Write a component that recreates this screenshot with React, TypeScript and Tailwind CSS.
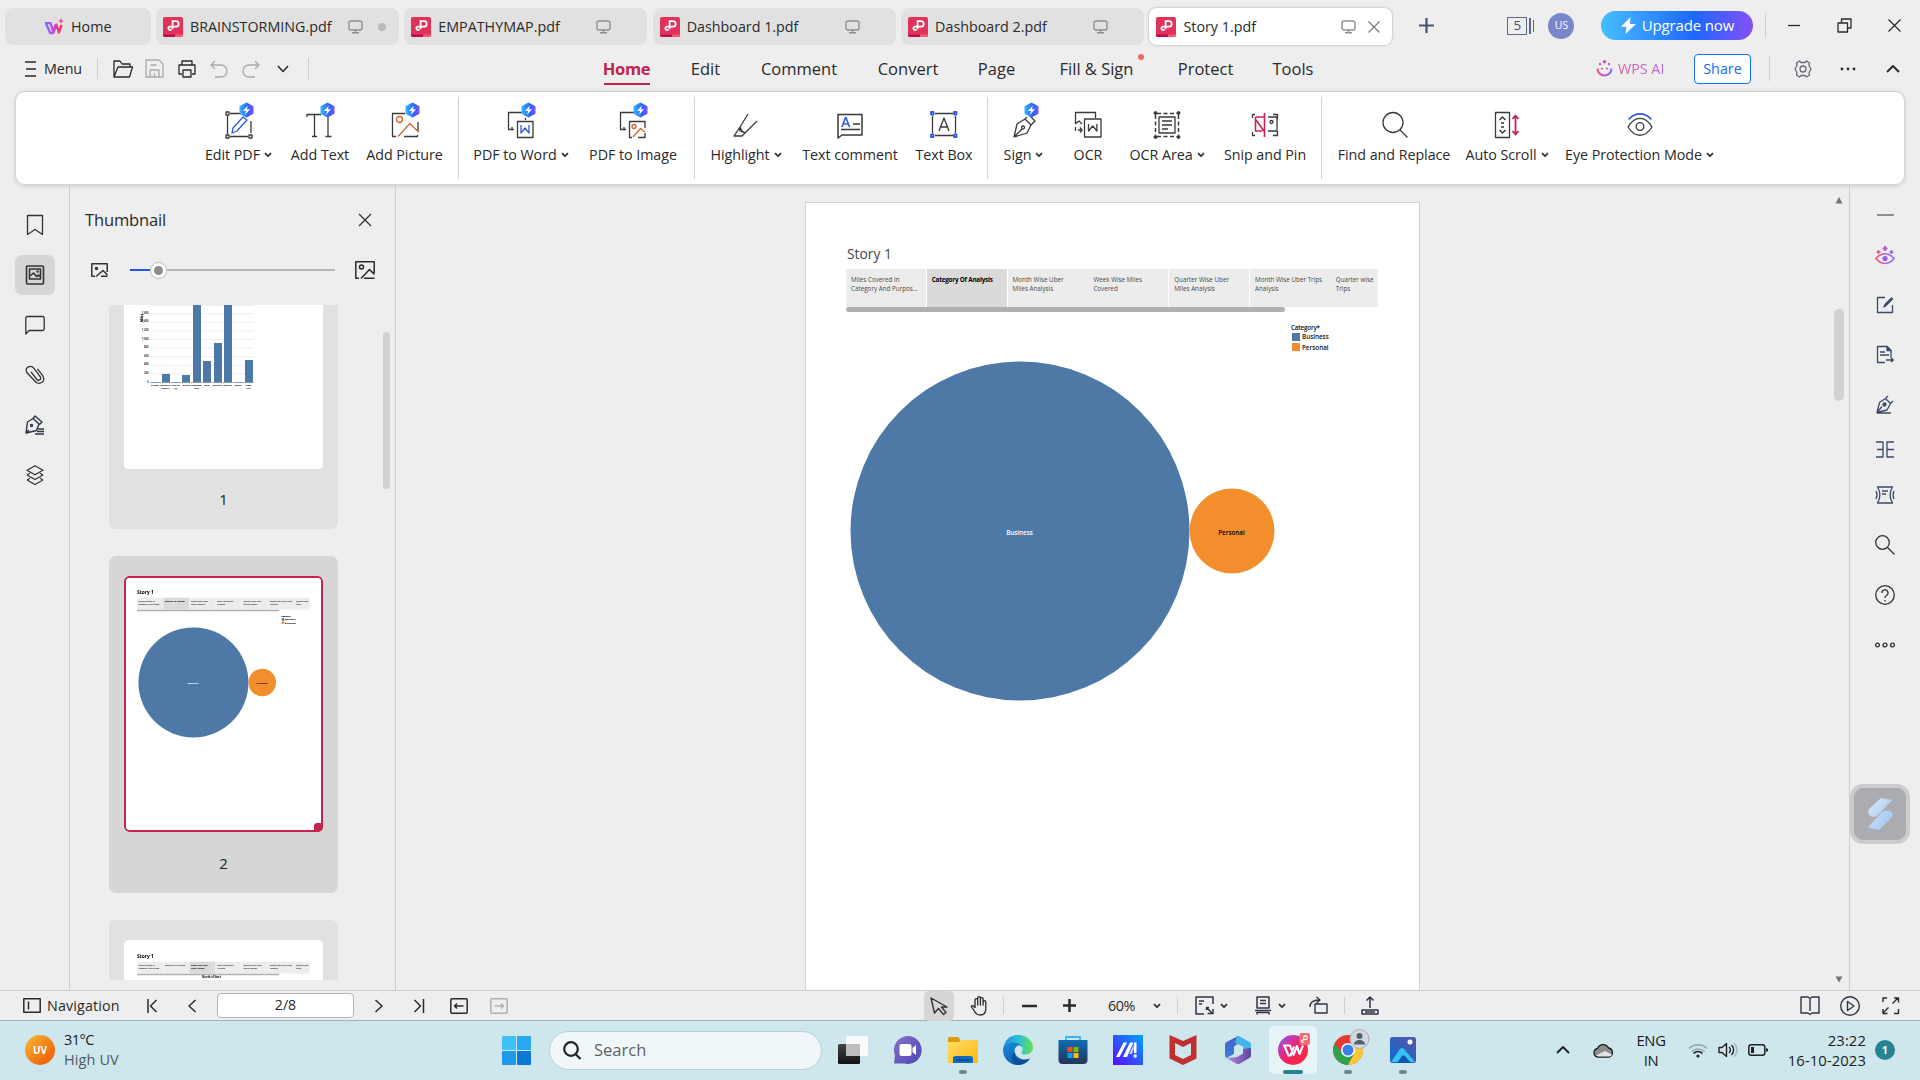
import React from "react";

type P = { children?: React.ReactNode; className?: string };

/* Line icon on a pixel grid: w × h units drawn at the same size */
function Ic({ w = 20, h = 20, sw = 1.3, className = "text-[#333]", children }: P & { w?: number; h?: number; sw?: number }) {
  return (
    <svg width={w} height={h} viewBox={`0 0 ${w} ${h}`} fill="none" stroke="currentColor" strokeWidth={sw} strokeLinejoin="round" className={`shrink-0 overflow-visible ${className}`}>
      {children}
    </svg>
  );
}

const Rule = ({ className = "" }: P) => <div className={`w-px shrink-0 bg-[#cfcfcf] ${className}`} />;

const Chev = ({ className = "" }: P) => (
  <Ic w={8} h={6} sw={1.8} className={`text-[#333] ${className}`}><path d="M1 1.2 4 4.2 7 1.2" /></Ic>
);

const Monitor = ({ className = "" }: P) => (
  <Ic w={15} h={14} sw={1.4} className={`text-[#8f8f8f] ${className}`}>
    <rect x="1" y="1" width="13" height="9" rx="2" /><path d="M7.500 10v2.500M4 12.800h7" />
  </Ic>
);

const PdfLogo = () => (
  <svg width="20" height="20" viewBox="0 0 20 20" className="shrink-0">
    <rect width="20" height="20" rx="2" fill="#e2325a" />
    <path d="M0 17.500h12V20H2a2 2 0 0 1-2-2z" fill="#b8104a" /><path d="M12 17.500h8V18a2 2 0 0 1-2 2h-6z" fill="#ff5570" />
    <path d="M9.600 12V4.200h3.400a2.700 2.700 0 0 1 0 5.400H7a1.700 1.700 0 1 0 1.500 2.600" fill="none" stroke="#fff" strokeWidth="1.800" />
  </svg>
);

function DocTab({ name, dot, active }: { name: string; dot?: boolean; active?: boolean }) {
  return (
    <div className={`flex h-[37px] w-[243px] shrink-0 items-center rounded-lg pl-[7px] ${active ? "bg-white shadow-[0_0_2px_1px_rgba(0,0,0,0.14)]" : "bg-[#e1e1e1]"}`}>
      <PdfLogo />
      <span className="ml-[7px] w-[158px] whitespace-nowrap">{name}</span>
      <Monitor />
      {dot && <span className="ml-[15px] size-2 rounded-full bg-[#b9b9b9]" />}
      {active && <Ic w={12} h={12} sw={1.2} className="ml-[12px] text-[#777]"><path d="m.5.5 11 11m0-11-11 11" /></Ic>}
    </div>
  );
}

function TitleBar() {
  return (
    <div className="flex h-[46px] pl-[5px] pt-2">
      <div className="flex gap-[5.400px]">
        <div className="flex h-[37px] w-[145.500px] items-center rounded-lg bg-[#e1e1e1] pl-[39px]">
          <svg width="20" height="18" viewBox="0 0 20 18" fill="none">
            <defs><linearGradient id="wps" x1="0" x2="1"><stop stopColor="#7c6cff" /><stop offset=".5" stopColor="#c44be8" /><stop offset="1" stopColor="#ff2e50" /></linearGradient></defs>
            <path d="M1 5.200H6.500L9.500 14.500 12.500 6.500l2.300 8 2.700-7.500M2 5.500 6.200 15h2.600L11.500 6.500" stroke="url(#wps)" strokeWidth="2.300" strokeLinejoin="round" />
            <path d="m17 0 .8 2.200L20 3l-2.200.8L17 6l-.8-2.200L14 3l2.200-.8z" fill="#ee3b8c" />
          </svg>
          <span className="ml-[7px]">Home</span>
        </div>
        <DocTab name="BRAINSTORMING.pdf" dot />
        <DocTab name="EMPATHYMAP.pdf" />
        <DocTab name="Dashboard 1.pdf" />
        <DocTab name="Dashboard 2.pdf" />
        <DocTab name="Story 1.pdf" active />
      </div>
      <div className="ml-[27px] flex h-[35px] items-center">
        <Ic w={15} h={15} sw={2.200} className="text-[#42546f]"><path d="M7.500 0v15M0 7.500h15" /></Ic>
        <div className="ml-[73px] flex items-center gap-[2px] text-[#42546f]">
          <div className="flex h-[18px] w-[20px] items-center justify-center border-[1.500px] border-[#5a6a84] text-[13.500px]">5</div>
          <div className="h-4 w-[1.500px] bg-[#5a6a84]" /><div className="h-3 w-[1.500px] bg-[#5a6a84]" />
        </div>
        <div className="ml-[14px] flex size-[26px] items-center justify-center rounded-full bg-[#7a86cc] text-[10.500px] text-white">US</div>
        <div className="ml-[27px] flex h-[29px] w-[152px] items-center justify-center gap-[6px] rounded-full bg-[linear-gradient(90deg,#45bfff,#1f66ff_62%,#8550f8)] text-[15px] text-white">
          <svg width="15" height="17" viewBox="0 0 15 17" fill="#fff"><path d="M9.500 0 0 9.700h5.500L4.500 17 15 7H9z" /></svg>
          <span className="tracking-[-0.15px]">Upgrade now</span>
        </div>
        <Rule className="ml-3 h-6" />
        <Ic w={12} h={14} className="ml-[22px]"><path d="M0 6.500h12" /></Ic>
        <Ic w={15} h={15} className="ml-[37px]"><path d="M1 5h9.500v9H1zM4.500 5V1H14v9h-3.500" /></Ic>
        <Ic w={13} h={13} className="ml-[36px]"><path d="m.5.5 12 12m0-12-12 12" /></Ic>
      </div>
    </div>
  );
}

const MENU: [string, string][] = [
  ["Edit", "ml-[40px] w-[29px]"],
  ["Comment", "ml-[41px] w-[76px]"],
  ["Convert", "ml-[41px] w-[60px]"],
  ["Page", "ml-[40px] w-[37px]"],
  ["Fill & Sign", "ml-[43px] w-[77px]"],
  ["Protect", "ml-[43px] w-[55px]"],
  ["Tools", "ml-[41px] w-[38px]"],
];

function MenuBar() {
  return (
    <div className="flex h-[45px] items-center">
      <Ic w={11} h={16} className="ml-[24.500px]"><path d="M0 1h11M1 8h10M0 15h11" /></Ic>
      <span className="ml-[8.500px] w-[38px] tracking-[-0.1px]">Menu</span>
      <Rule className="ml-[15px] h-[21px]" />
      <Ic w={20} h={18} className="ml-[15px]"><path d="M1 17V1h6l2 3h8v3M1 17 5 7h14.500l-3 10z" /></Ic>
      <Ic w={19} h={19} className="ml-[12px] text-[#aaa]"><path d="M1 1h13l4 4v13H1zM5.500 6h6M5 18v-7h9v7M9.500 14v4" /></Ic>
      <Ic w={18} h={18} className="ml-[14px]"><path d="M4 5V1h10v4M4 14H1V5h16v9h-3M5 10h8v7H5z" /></Ic>
      <Ic w={18} h={18} className="ml-[14px] text-[#aaa]"><path d="M5 1 1 5l4 4M1 5h10a6 6 0 0 1 0 12H5" /></Ic>
      <Ic w={18} h={18} className="ml-[14px] text-[#aaa]"><path d="m13 1 4 4-4 4M17 5H7a6 6 0 0 0 0 12h6" /></Ic>
      <Ic w={12} h={8} sw={1.500} className="ml-[17px]"><path d="m1 1 5 5.500L11 1" /></Ic>
      <Rule className="ml-[19px] h-[21px]" />
      <div className="ml-[293px] flex h-full items-end text-[16.500px]">
        <div className="flex h-[39px] w-[49px] flex-col items-center justify-between whitespace-nowrap font-bold text-[#c2224d]">
          <span className="mt-[4px] leading-[26px] tracking-[-0.3px]">Home</span>
          <div className="mb-[6px] h-[2px] w-[46px] bg-[#c8234f]" />
        </div>
        {MENU.map(([t, c]) => (
          <div key={t} className={`flex h-[39px] justify-center whitespace-nowrap pt-[4px] leading-[26px] ${c}`}>
            {t}
            {t === "Fill & Sign" && <div className="-mt-[2px] w-0"><div className="ml-[5px] size-[6px] rounded-full bg-[#ee6a66]" /></div>}
          </div>
        ))}
      </div>
      <svg width="17" height="18" viewBox="0 0 17 18" fill="none" className="ml-[284px] shrink-0">
        <defs><linearGradient id="ai" x1="0" x2="1"><stop stopColor="#f0506e" /><stop offset=".5" stopColor="#c45ad0" /><stop offset="1" stopColor="#7d6bff" /></linearGradient></defs>
        <path d="M1.500 8.500a7 7 0 0 0 14 0" stroke="url(#ai)" strokeWidth="2" />
        <g fill="#c857c0"><circle cx="8.500" cy="1.800" r="1.800" /><circle cx="4" cy="4" r="1.200" /><circle cx="13" cy="4" r="1.200" /><circle cx="6" cy="8.500" r="1.100" /><circle cx="11" cy="8.500" r="1.100" /></g>
      </svg>
      <span className="ml-[5px] w-[48px] whitespace-nowrap bg-[linear-gradient(90deg,#dd5d9c,#a86ae8)] bg-clip-text text-transparent">WPS AI</span>
      <div className="ml-[28px] flex h-[30px] w-[57px] items-center justify-center rounded border border-[#1070f5] bg-white text-[#1070f5]">Share</div>
      <Rule className="ml-[18px] h-[25px]" />
      <Ic w={18} h={18} className="ml-[24px] text-[#666b78]"><path d="M5.500 1 7 2.500h4L12.500 1l3 2-.5 2.500L17 9l-2 3.500.5 2.500-3 2-1.500-1.500H7L5.500 17l-3-2 .5-2.500L1 9l2-3.500L2.500 3z" /><circle cx="9" cy="9" r="3" /></Ic>
      <Ic w={16} h={4} className="ml-[28px]"><g fill="currentColor" stroke="none"><circle cx="2" cy="2" r="1.400" /><circle cx="8" cy="2" r="1.400" /><circle cx="14" cy="2" r="1.400" /></g></Ic>
      <Ic w={14} h={8} sw={1.900} className="ml-[30px]"><path d="m1 7 6-6 6 6" /></Ic>
    </div>
  );
}

/* Hexagonal premium badge drawn at the icon's upper right */
const Bolt = ({ x, y }: { x: number; y: number }) => (
  <g transform={`translate(${x} ${y})`} stroke="none">
    <path d="M7.500-.5 14.500 3.300v7.400L7.500 14.500.5 10.700V3.300z" fill="url(#bolt)" />
    <path d="M8.800 2.500 4 8h3l-1 4 5-5.800H8z" fill="#fff" />
  </g>
);

const B = "#2f5be0";
const O = "#d9622b";
const R = "#c8234f";

const ICONS: Record<string, React.ReactNode> = {
  "Edit PDF": <><path d="M5 2.500h11M2.500 5v18M26 10v12M5 25.500h18" /><g><rect x="1" y="1" width="3" height="3" /><rect x="1" y="24" width="3" height="3" /><rect x="24" y="24" width="3" height="3" /></g><path d="m7 22 1-5L18 6l4 3L12 20z" stroke={B} /><Bolt x={14} y={-8} /></>,
  "Add Text": <><path d="M1 6V3.500h14M8.500 3.500V25M6 25.500h5M22 5v20M19.500 25.500h6" /><Bolt x={14} y={-8} /></>,
  "Add Picture": <><path d="M14 2.500H1.500V25.500H5M27 11v10M13 25.500h13.500V24" /><circle cx="8.500" cy="8.500" r="3" stroke={O} /><path d="m7 25.500 12-13 8 8" stroke={O} /><Bolt x={14} y={-8} /></>,
  "PDF to Word": <><path d="M15 1.500H1.500v17H7M5 16v2.500M18.500 7V9M10.500 10.500H26v16H10.500z" /><path d="M14 14v8l4-5 4 5v-8" stroke={B} /><Bolt x={14} y={-8} /></>,
  "PDF to Image": <><path d="M15 1.500H1.500v17H7M5 16v2.500M26 17v-6.500H10.500v16H13M19 26.500h7V22" /><circle cx="15" cy="15.500" r="2" stroke={O} /><path d="m14 26 7.500-8.500L26 21" stroke={O} /><Bolt x={14} y={-8} /></>,
  Highlight: <path d="M16 3 8 16v4l5 2L25 10M8 16l2 4 3 2-3 3H2z" />,
  "Text comment": <><path d="M2 27V3.500h24V24H6zM17 13h7M17 18.500h7M5 18.500h12" strokeWidth="1.500" /><path d="m6 16 3.500-9.500h.5L13.500 16M7.500 13h5" stroke={B} strokeWidth="1.600" /></>,
  "Text Box": <><path d="M5 2.500h18M2.500 5v17M25.500 5v17M5 24.500h18" /><path d="m9 20 5-13 5 13M10.500 16h7" /><g stroke={B} strokeWidth="1.800"><rect x="1" y="1" width="2.500" height="2.500" /><rect x="24" y="1" width="2.500" height="2.500" /><rect x="1" y="23.500" width="2.500" height="2.500" /><rect x="24" y="23.500" width="2.500" height="2.500" /></g></>,
  Sign: <><path d="M4 26 7 13l8-5 6 6-4 8zM15 8l2-2M21 14l4-4-6-6M4 26l8-8" /><circle cx="13" cy="16.500" r="1.500" /><Bolt x={14} y={-8} /></>,
  OCR: <><path d="M1.500 12V1.500h20V7M1.500 16v4M10.500 8H27v18H10.500zM1 13l4-3 3 3M8 19H4m2-2.500L8 19l-2 2.500" /><path d="M14.500 13v7l4.200-5 4.200 5v-7" /></>,
  "OCR Area": <><path d="M4 2.500h20M2.500 4v20M25.500 4v20M4 25.500h20" strokeDasharray="4 2.500" strokeWidth="1.500" /><rect x="6" y="6" width="16" height="16" /><path d="M9 10h10M9 14h10M9 18h6" /><g fill="#333" strokeWidth="1"><circle cx="2.500" cy="2" r="1.500" /><circle cx="25.500" cy="2" r="1.500" /><circle cx="2.500" cy="26" r="1.500" /><circle cx="25.500" cy="26" r="1.500" /></g></>,
  "Snip and Pin": <><path d="M4 3.500H1.500V7M1.500 21v3.500H4M22 3.500h4.500V8M26.500 20v4.500H22M17 6h9v14h-9" /><circle cx="20.500" cy="11" r="1.500" /><path d="M13.500 2v24M4.500 6h9M4.500 6v14h7M5 9l8 11" stroke={R} strokeWidth="1.600" /></>,
  "Find and Replace": <><circle cx="13" cy="11.500" r="10" /><path d="m20 19 7.500 7.500" /></>,
  "Auto Scroll": <><rect x="2.500" y="1.500" width="14" height="25" /><path d="m6.500 9 3-3 3 3M6.500 19l3 3 3-3M8 12h3M8 16h3" strokeWidth="1.500" /><path d="M22.500 5v17m-3-14 3-3.500 3 3.500m-6 12 3 3.500 3-3.500" stroke={R} strokeWidth="1.800" /></>,
  "Eye Protection Mode": <><path d="M2 16C9 4.500 19 4.500 26 16 19 27 9 27 2 16z" /><circle cx="14" cy="15.500" r="3.800" /><path d="M2.500 8.500c7-7.500 16-7.500 23 0" stroke={B} strokeWidth="1.600" /></>,
};

/* label, cell width, dropdown */
const RIBBON: [string, string, boolean?][][] = [
  [["Edit PDF", "ml-[188px] w-[69px]", true], ["Add Text", "ml-[16px] w-[62px]"], ["Add Picture", "ml-[14px] w-[79px]"]],
  [["PDF to Word", "ml-[14px] w-[96px]", true], ["PDF to Image", "ml-[18px] w-[92px]"]],
  [["Highlight", "ml-[14px] w-[74px]", true], ["Text comment", "ml-[19px] w-[96px]"], ["Text Box", "ml-[16px] w-[60px]"]],
  [["Sign", "ml-[15px] w-[41px]", true], ["OCR", "ml-[27px] w-[34px]"], ["OCR Area", "ml-[24px] w-[76px]", true], ["Snip and Pin", "ml-[18px] w-[84px]"]],
  [["Find and Replace", "ml-[14px] w-[116px]"], ["Auto Scroll", "ml-[12px] w-[86px]", true], ["Eye Protection Mode", "ml-[14px] w-[151px]", true]],
];
const GROUP_W = ["w-[443px]", "w-[236px]", "w-[293px]", "w-[334px]", "w-[560px]"];

function Ribbon() {
  return (
    <div className="ml-[15px] flex h-[94px] w-[1890px] items-stretch rounded-[10px] border border-[#d4d4d4] bg-white py-[5px] shadow-[0_1px_4px_rgba(0,0,0,0.15)]">
      {RIBBON.map((g, i) => (
        <div key={i} className={`flex shrink-0 ${GROUP_W[i]} ${i < 4 ? "border-r border-[#d2d2d2]" : ""}`}>
          {g.map(([label, w, drop]) => (
            <div key={label} className={`flex shrink-0 flex-col items-center pt-[14px] ${w}`}>
              <Ic w={28} h={28} className="text-[#3a3a3a]">{ICONS[label]}</Ic>
              <div className="mt-[6px] flex items-center gap-[4px] whitespace-nowrap leading-[20px] tracking-[-0.05px]">{label}{drop && <Chev />}</div>
            </div>
          ))}
        </div>
      ))}
      <svg width="0" height="0"><defs><linearGradient id="bolt" x1="0" x2="1"><stop stopColor="#38b6ff" /><stop offset=".6" stopColor="#2a62ff" /><stop offset="1" stopColor="#8450f8" /></linearGradient></defs></svg>
    </div>
  );
}

function LeftRail() {
  const c = "flex size-[40px] items-center justify-center rounded-[7px]";
  return (
    <div className="flex w-[70px] shrink-0 flex-col items-center gap-[10px] border-r border-[#cdcdcd] pt-[20px]">
      <div className={c}><Ic><path d="M2.500.5h15v19L10 14.500l-7.500 5z" /></Ic></div>
      <div className={`${c} bg-[#d6d6d6]`}><Ic sw={1.600}><rect x="1.500" y="1" width="17" height="18" rx="1" /><rect x="4.500" y="4" width="11" height="10" /><path d="m5 11 3.500-3 3 3.500 2-1.500 2 2" /><circle cx="12.500" cy="6.500" r=".5" /></Ic></div>
      <div className={c}><Ic><path d="M.8 19V3A1.500 1.500 0 0 1 2.300 1.500h15.400A1.500 1.500 0 0 1 19.200 3v11a1.500 1.500 0 0 1-1.500 1.500H4z" /></Ic></div>
      <div className={c}>
        <Ic><path d="M12.500 3.500l5 6.500c2 3 1.500 5.500-.5 7s-5 1.200-7-1L2 7.500C.5 5 1 3 3 1.800S7.300 1 9 3l6 8c1 1.500 1 2.800 0 3.500s-2.500.5-3.500-.8L6 6.500" transform="translate(0 .3)" /></Ic>
      </div>
      <div className={c}><Ic sw={1.400} className="text-[#2e3547]"><path d="m1 18 1.500-11L8 3.500l6 5.500-2.500 6.500zM8 3.500l2-2.500 7 6-2.500 2.500M13 14h6M12 16.500h7M10 19h9M1 18l3-3" /><circle cx="6.500" cy="10.500" r="1" /></Ic></div>
      <div className={c}><Ic><path d="m10 .8 8 4.500-8 4.500-8-4.500zM2 10l8 4.500L18 10M2 15l8 4.500 8-4.500M2 10l3-1.700M18 10l-3-1.700M2 15l3-1.700m13 1.700-3-1.700" /></Ic></div>
    </div>
  );
}

const STEPS: [string, string][] = [
  ["Miles Covered In", "Category And Purpos..."],
  ["Category Of Analysis", ""],
  ["Month Wise Uber", "Miles Analysis"],
  ["Week Wise Miles", "Covered"],
  ["Quarter Wise Uber", "Miles Analysis"],
  ["Month Wise Uber Trips", "Analysis"],
  ["Quarter wise", "Trips"],
];

/* mini: heavier text so that a scaled-down page stays visible */
function StoryPage({ active, mini, children }: { active: number; mini?: boolean; children?: React.ReactNode }) {
  return (
    <div className="flex h-[790px] w-[613px] flex-col bg-white pl-[40px] pt-[40px]">
      <div className={`h-[26px] leading-[21px] ${mini ? "text-[15px] font-bold text-black" : "pl-px text-[13.800px] text-[#444]"}`}>Story 1</div>
      <div className="flex h-[38px] w-[532px] overflow-hidden">
        {STEPS.map(([a, b], i) => (
          <div key={i} className={`h-full w-[80.800px] shrink-0 whitespace-nowrap pl-[5px] pt-[6px] text-[6.300px] leading-[9px] ${i === active ? "bg-[#dadada] font-bold tracking-[-0.2px] text-black" : mini ? "bg-[#ececec] font-bold tracking-[-0.15px] text-[#333]" : "bg-[#ececec] tracking-[-0.01px] text-[#4a4a4a]"} ${i === 2 || i === 5 ? "" : "border-r border-white"}`}>
            {a}<br />{b}
          </div>
        ))}
      </div>
      <div className="h-[5px] w-[439px] rounded-full bg-[#b0b0b0]" />
      {children}
    </div>
  );
}

const Bubbles = ({ mini }: { mini?: boolean }) => (
  <svg width="532" height="400" viewBox="846 312 532 400" className="font-[Open_Sans]" fontSize={mini ? 7.500 : 6.300} fontWeight={mini ? 800 : 600}>
    <circle cx="1020" cy="531" r="169.500" fill="#4e79a7" />
    <circle cx="1232" cy="531" r="42.500" fill="#f28e2b" />
    <text x="1019.500" y="535" textAnchor="middle" fill="#fff">Business</text>
    <text x="1231.500" y="535" textAnchor="middle" fill="#000">Personal</text>
    <text x="1291" y="330" fill="#111" textLength="29">Category*</text>
    <rect x="1292" y="333" width="8" height="8" fill="#4e79a7" />
    <rect x="1292" y="343" width="8" height="8" fill="#f28e2b" />
    <text x="1302" y="339" fill="#111">Business</text>
    <text x="1302" y="350" fill="#111">Personal</text>
  </svg>
);

/* x and height of each bar; the two tallest run past the visible top */
const BARS = [[27, 0.5], [38, 8.500], [48, 0.5], [58, 7.500], [69, 80], [79, 21.500], [90, 39.500], [100, 80], [110, 0.5], [121, 22.500]];
const TICKS = ["0", "200", "400", "600", "800", "1,000", "1,200", "1,400", "1,600"];
const CATS = [["Airport"], ["Between", "Offices"], ["Charity", "($)"], ["Errand"], ["Customer", "Visit"], ["Meal"], ["Meeting"], ["Moving"], ["Office"], ["Temp.", "Site"]];

const BarChart = () => (
  <svg width="199" height="165" viewBox="0 0 199 165" className="font-[Open_Sans]">
    <path d="M26 .6h104" stroke="#eee" />
    {TICKS.map((t, i) => (
      <g key={t}>
        <path d={`M26 ${77.500 - i * 8.600}h104`} stroke={i ? "#eee" : "#bbb"} strokeWidth="1" />
        <text x="24.500" y={77.500 - i * 8.600} textAnchor="end" fontSize="2.600" fontWeight="700" fill="#333">{t}</text>
      </g>
    ))}
    {BARS.map(([x, h]) => <rect key={x} x={x} y={77.500 - h} width="8" height={h} fill="#4e79a7" />)}
    {CATS.map(([a, b], i) => (
      <g key={a} textAnchor="middle" fontSize="2.200" fontWeight="800" fill="#222">
        <text x={31 + i * 10.400} y="81">{a}</text>
        {b && <text x={31 + i * 10.400} y="84">{b}</text>}
      </g>
    ))}
    <text transform="translate(18.500 17) rotate(-90)" fontSize="3" fontWeight="800">Miles</text>
  </svg>
);

function Thumbnails() {
  return (
    <div className="flex w-[326px] shrink-0 flex-col border-r border-[#cdcdcd]">
      <div className="flex h-[70px] items-center pl-[15px]">
        <span className="w-[274px] text-[16.500px] tracking-[-0.15px]">Thumbnail</span>
        <Ic w={12} h={12}><path d="m0 0 12 12M12 0 0 12" /></Ic>
      </div>
      <div className="flex h-[30px] items-center pl-[21px]">
        <Ic w={17} h={14} sw={1.500}><path d="M4 13.300H.8V.8h15.400V9M5 13.500l7-6 4.500 4.500M10 13.300h6.500" /><circle cx="5.500" cy="5.500" r="1" /></Ic>
        <div className="ml-[22px] flex w-[205px] items-center">
          <div className="h-[2px] w-[20px] bg-[#2456e6]" />
          <div className="flex size-[17px] items-center justify-center rounded-full border border-[#bbb] bg-white"><div className="size-[9px] rounded-full bg-[#8c8c8c]" /></div>
          <div className="h-[2px] flex-1 bg-[#b8b8b8]" />
        </div>
        <Ic w={20} h={18} sw={1.500} className="ml-[20px]"><path d="M4 17.300H.8V.8h18.400V12M6 17.500l8.500-9 5 5M9 17.300h10.500" /><circle cx="6.500" cy="6" r="2" /></Ic>
      </div>
      <div className="mt-[20px] flex h-[675px] overflow-hidden">
        <div className="ml-[39px] flex w-[229px] flex-col gap-[27px] text-[15px] text-[#222]">
          <div className="flex h-[224px] shrink-0 flex-col items-center rounded-b-[7px] bg-[#e1e1e1]">
            <div className="h-[164px] w-[199px] overflow-hidden rounded-b-[4px] bg-white"><BarChart /></div>
            <span className="mt-[19px]">1</span>
          </div>
          <div className="flex h-[337px] shrink-0 flex-col items-center rounded-[7px] bg-[#d6d6d6] pt-[20px]">
            <div className="relative h-[256px] w-[199px] overflow-hidden rounded-[5px] bg-white">
              <div className="origin-top-left scale-[0.3245]"><StoryPage active={1} mini><Bubbles mini /></StoryPage></div>
              <div className="absolute inset-0 rounded-[5px] border-2 border-[#c8234f]" />
              <div className="absolute bottom-0 right-0 size-[9px] rounded-[3px] bg-[#c8234f]" />
            </div>
            <span className="mt-[20px]">2</span>
          </div>
          <div className="flex h-[337px] shrink-0 flex-col items-center rounded-[7px] bg-[#e1e1e1] pt-[20px]">
            <div className="h-[256px] w-[199px] overflow-hidden rounded-[5px] bg-white">
              <div className="origin-top-left scale-[0.3245]">
                <StoryPage active={2} mini><div className="pl-[200px] pt-[1px] text-[8px] font-bold leading-[10px] text-black">Month of Start</div></StoryPage>
              </div>
            </div>
          </div>
        </div>
        <div className="ml-[45px] mt-[27px] h-[157px] w-[7px] rounded-full bg-[#d1d1d1]" />
      </div>
    </div>
  );
}

function RightRail() {
  const n = "text-[#3b4a66]";
  return (
    <div className="relative flex w-[71px] shrink-0 flex-col items-center border-l border-[#cdcdcd]">
      <div className="mt-[29px] h-[2px] w-[17px] bg-[#8f8f8f]" />
      <svg width="20" height="19" viewBox="0 0 20 19" fill="none" className="mt-[30px]">
        <path d="M1 12.500C6 6 14 6 19 12.500 14 19 6 19 1 12.500z" stroke="url(#ai)" strokeWidth="1.500" />
        <circle cx="10" cy="12.500" r="2.600" fill="#9a5fe0" />
        <path d="M10 0v5M7.500 2.500h5" stroke="#b85ac8" strokeWidth="2" /><path d="M3.500 4v4M1.500 6h4" stroke="#e0558a" strokeWidth="1.500" /><path d="M16.500 4v4M14.500 6h4" stroke="#8a63f5" strokeWidth="1.500" />
      </svg>
      <Ic w={18} h={18} className={`mt-[31px] ${n}`}><path d="M9 1.500H1.500v15h15V9" /><path d="m8 11 1-2.500 6.500-6.500 1 1-6.500 6.500z" fill="currentColor" /></Ic>
      <Ic w={18} h={19} className={`mt-[31px] ${n}`}><path d="M9 17.500H1.500v-16H11l4 4V13M4 7h5M4 10h9M10 15h7m-2-2 2.300 2-2.300 2" /><path d="M11 1.500v4h4z" fill="currentColor" /></Ic>
      <Ic w={18} h={19} className={`mt-[31px] ${n}`}><path d="M1 17.500 3.500 7.500l6-4 5 5-3.500 6.500zM9.500 3.500 12 1m2.500 7.500L17 6M1 17.500l5-6M1 18h14" /><circle cx="8.500" cy="9.500" r="1.500" fill="currentColor" /></Ic>
      <Ic w={18} h={17} className={`mt-[27px] ${n}`}><path d="M0 1h7v15H0M1 8.500h6M18 1h-7v15h7M11 8.500h7" /></Ic>
      <Ic w={20} h={18} className={`mt-[28px] ${n}`}><path d="M2.500 1h15c-3 5-3 11 0 16h-15c3-5 3-11 0-16zM7 5h6M7 8h4M1 5c1.500 3 1.500 5 0 8M19 5c-1.500 3-1.500 5 0 8" /></Ic>
      <Ic className="mt-[31px] text-[#333]"><circle cx="7.500" cy="7.500" r="6.800" /><path d="m12.500 12.500 7 7" /></Ic>
      <Ic className="mt-[30px] text-[#333]"><circle cx="10" cy="10" r="9.300" /><path d="M7 8a3 3 0 1 1 4.500 2.500c-1 .7-1.500 1-1.500 2.500M10 15v1.500" /></Ic>
      <Ic h={6} sw={1.400} className="mt-[37px] text-[#333]"><circle cx="2.500" cy="3" r="1.900" /><circle cx="10" cy="3" r="1.900" /><circle cx="17.500" cy="3" r="1.900" /></Ic>
      <div className="absolute left-0 top-[599px] flex size-[60px] items-center justify-center rounded-[13px] border-4 border-[#cbccd0] bg-[#abacb2]">
        <svg width="26" height="34" viewBox="0 0 26 34">
          <defs><linearGradient id="fl" x1="0" x2="1" y2="1"><stop stopColor="#d8e8f8" /><stop offset="1" stopColor="#9cc4ee" /></linearGradient></defs>
          <path d="M14 1 25 3 10 19c-5 3-11-2-8-7zM12 33 1 30.500 15 15c4-3 13-2 10 5z" fill="url(#fl)" />
        </svg>
      </div>
    </div>
  );
}

function StatusBar() {
  return (
    <div className="flex h-[31px] items-center border-b border-[#a3b1b9] border-t border-t-[#cdcdcd]">
      <Ic w={18} h={15} sw={1.500} className="ml-[23px]"><rect x=".8" y=".8" width="16.400" height="13.400" /><path d="M5.500 3.500v8" /></Ic>
      <span className="ml-[6px] w-[73px] whitespace-nowrap tracking-[0.15px]">Navigation</span>
      <Ic w={10} h={14} sw={1.500} className="ml-[27px]"><path d="M1 0v14M9.500 1l-6 6 6 6" /></Ic>
      <Ic w={8} h={14} sw={1.500} className="ml-[31px]"><path d="M7.500 1 1 7l6.500 6" /></Ic>
      <div className="ml-[21px] flex h-[25px] w-[137px] items-center justify-center rounded-[4px] border border-[#b5b5b5] bg-white pb-px text-[14.200px]">2/8</div>
      <Ic w={8} h={14} sw={1.500} className="ml-[21px]"><path d="M.5 1 7 7 .5 13" /></Ic>
      <Ic w={10} h={14} sw={1.500} className="ml-[31px]"><path d="m.5 1 6 6-6 6M9.500 0v14" /></Ic>
      <Ic w={18} h={16} sw={1.500} className="ml-[26px]"><rect x=".8" y=".8" width="16.400" height="14.400" rx="1" /><path d="M13.500 8h-9M7 5.500 4.500 8 7 10.500" /></Ic>
      <Ic w={18} h={16} sw={1.500} className="ml-[22px] text-[#b0b0b0]"><rect x=".8" y=".8" width="16.400" height="14.400" rx="1" /><path d="M4.500 8h9M11 5.500 13.500 8 11 10.500" /></Ic>
      <div className="ml-[416px] flex h-[30px] w-[30px] items-center justify-center rounded-[5px] bg-[#d6d6d6]">
        <Ic w={18} h={18} sw={1.400}><path d="m1 1 3.500 15 4-4.500 5 6 2.500-2-4.500-5.500H17z" /></Ic>
      </div>
      <Ic w={19} h={20} className="ml-[16px]"><path d="M5 12V4a1.300 1.300 0 0 1 2.700 0v5-7a1.300 1.300 0 0 1 2.700 0v7V3a1.300 1.300 0 0 1 2.700 0v6-3a1.300 1.300 0 0 1 2.700 0v7c0 4-2 6-5.500 6-4 0-5-2-6-4l-3-4.500c.7-1.500 2.500-1.300 3.700 1.500" /></Ic>
      <Rule className="ml-[14px] h-[17px]" />
      <Ic w={15} h={4} sw={2.500} className="ml-[18px]"><path d="M0 2h15" /></Ic>
      <Ic w={13} h={13} sw={2.500} className="ml-[26px]"><path d="M0 6.500h13M6.500 0v13" /></Ic>
      <span className="ml-[32px] w-[28px] whitespace-nowrap tracking-[-0.4px]">60%</span>
      <Chev className="ml-[17px]" />
      <Rule className="ml-[16px] h-[17px]" />
      <Ic w={20} h={19} sw={1.500} className="ml-[17px] text-[#2e3547]"><path d="M9 18H1V1h17v7M4 5h5M4 8h3M12 12l6 6m-5.500-.5H18V13M11.500 14v-2.500H14" /></Ic>
      <Chev className="ml-[5px]" />
      <Ic w={16} h={19} sw={1.500} className="ml-[27px] text-[#2e3547]"><path d="M2 1h12v11H2zM5 4.500h6M5 7.500h6M0 14.500h16M2 18.500v-2h12v2" /></Ic>
      <Chev className="ml-[7px]" />
      <Ic w={19} h={19} sw={1.400} className="ml-[23px] text-[#2e3547]"><path d="M6 8h12v9H6zM1 11C1 6 4 4 10 4M7.500 1 11 4 7.500 7" /></Ic>
      <Rule className="ml-[16px] h-[17px]" />
      <Ic w={18} h={19} sw={1.500} className="ml-[16px] text-[#2e3547]"><path d="M9 12V1M5.500 4.500 9 1l3.500 3.500M1 14h16v4H1zM4 16h10" /></Ic>
      <Ic w={20} h={19} sw={1.400} className="ml-[421px] text-[#2e3547]"><path d="M1 1h7l2 1.500L12 1h7v16h-7l-2 1.500L8 17H1zM10 2.500V15" /></Ic>
      <Ic sw={1.400} className="ml-[20px] text-[#2e3547]"><circle cx="10" cy="10" r="9.300" /><path d="m7.500 5.500 6.500 4.500-6.500 4.500z" /></Ic>
      <Ic w={17} h={17} sw={1.400} className="ml-[22px]"><path d="M1 5V1h4M1 16l5.500-5.500M1 12v4.500h4.500M10.500 6.500 16 1M12 1h4.500v4.500M16.500 12v4.500H12" /></Ic>
    </div>
  );
}

const APPS: { art: React.ReactNode; dot?: boolean; on?: boolean }[] = [
  { art: <><defs><linearGradient id="tv" x1="0" y2="1" x2="0"><stop stopColor="#444" /><stop offset="1" stopColor="#111" /></linearGradient></defs><rect x="0" y="9" width="22" height="20" rx="1.500" fill="url(#tv)" /><rect x="8" y="1" width="22" height="20" rx="1.500" fill="#fafafa" /><rect x="8" y="9" width="14" height="12" fill="#bdbdbd" /></> },
  { art: <><defs><linearGradient id="ct" x1="0" y1="0" x2="1" y2="1"><stop stopColor="#8a6fc8" /><stop offset="1" stopColor="#4a46b8" /></linearGradient></defs><path d="M15 1a14 14 0 1 1-4 27.500H1l1-8A14 14 0 0 1 15 1z" fill="url(#ct)" /><rect x="6.500" y="9" width="12" height="12" rx="2" fill="#fff" /><path d="m19.500 13 3.500-3v10l-3.500-3z" fill="#fff" /></> },
  { art: <><defs><linearGradient id="fo" x1="0" x2="1" y2="1"><stop stopColor="#ffdc6c" /><stop offset="1" stopColor="#fdb90d" /></linearGradient></defs><path d="M0 3.500A1.500 1.500 0 0 1 1.500 2h8.500l2.500 3H29v6H0z" fill="#dc9a08" /><path d="M0 7h10.500L13 5h16a1 1 0 0 1 1 1v22H0z" fill="url(#fo)" /><path d="M5 28v-4.500A2.500 2.500 0 0 1 7.500 21h15a2.500 2.500 0 0 1 2.500 2.500V28z" fill="#0f6cbd" /><path d="M8 25h14" stroke="#0a3f78" strokeWidth="1.300" /></>, dot: true },
  { art: <><defs><linearGradient id="eg" x1="0" x2="1"><stop stopColor="#1c8fe0" /><stop offset=".55" stopColor="#2cc0d0" /><stop offset="1" stopColor="#6be04a" /></linearGradient><linearGradient id="eb" x1="0" x2="1" y1="0" y2="1"><stop stopColor="#1790e0" /><stop offset="1" stopColor="#0c4a94" /></linearGradient></defs><path d="M0 15C1 5 7 0 15 0c9 0 15 6 15 12.500 0 4.500-3.500 7-7.500 7-3 0-5-1-3.500-3 2-3-.5-6.500-4-6.500C9 10 4 11 0 15z" fill="url(#eg)" /><path d="M0 15C1 9 7 7 13 8c3 .5 5 2 6 4-4-4-9 1-7 6 2 6 9 8 15 5.500C24 28 19.500 30 15 30 6 30 0 23 0 15z" fill="url(#eb)" /><path d="M12 17c-1.500 8 7 11 15 6.500C24 28 19 30 15 30c-6-2-8-9-3-13z" fill="#0d4f9b" /></> },
  { art: <><defs><linearGradient id="st" x1="0" y2="1" x2="0"><stop stopColor="#0f6cb4" /><stop offset="1" stopColor="#243558" /></linearGradient></defs><path d="M8 7V2h14v5" fill="none" stroke="#35b6f0" strokeWidth="1.800" /><path d="M.5 5h29v20a4 4 0 0 1-4 4h-21a4 4 0 0 1-4-4z" fill="url(#st)" /><path d="M9.500 12h5v5h-5z" fill="#f25022" /><path d="M15.500 12h5v5h-5z" fill="#7fba00" /><path d="M9.500 18h5v5h-5z" fill="#00a4ef" /><path d="M15.500 18h5v5h-5z" fill="#ffb900" /></> },
  { art: <><defs><linearGradient id="my" x1="0" y1="1" x2="1" y2="0"><stop stopColor="#5a0aff" /><stop offset="1" stopColor="#00a4ff" /></linearGradient></defs><rect width="30" height="30" fill="url(#my)" /><path d="M3 22 10.500 7.500h3.500L6.500 22zM10 22 17 7.500h3.500L14 22z" fill="#fff" /><path d="M21 7.500h2.500V18H21z" fill="#fff" /><path d="m16.500 19 4-9v4.500L18.500 19z" fill="#dfe6ff" /><circle cx="22.200" cy="21" r="1.700" fill="#fff" /></> },
  { art: <path d="m1.500 0 13.500 6L28.500 0v23.500L15 30 1.500 23.500zM7 8v12l8 4 8-4V8l-8 4z" fill="#c22f2f" fillRule="evenodd" /> },
  { art: <><defs><linearGradient id="mz" x1="0" x2="0" y2="1"><stop stopColor="#4a5cc8" /><stop offset="1" stopColor="#3b82dc" /></linearGradient><linearGradient id="mp" x1="0" x2="1"><stop stopColor="#b98ae8" /><stop offset="1" stopColor="#5d449c" /></linearGradient></defs><path d="M15 1 3.500 7A3 3 0 0 0 2 9.500v11A3 3 0 0 0 3.500 23L11 19V11.500L19 6z" fill="url(#mz)" /><path d="M14 1.300 12 8l8 3.500V19l8-4V9.500A3 3 0 0 0 26.500 7L17 1.500a3 3 0 0 0-3-.2z" fill="#45b4ec" /><path d="M3.500 23 13 28.500a4 4 0 0 0 4 0l9.500-5.500a3 3 0 0 0 1.500-2.500V13l-8 1v4.500l-6 3.500z" fill="url(#mp)" /></> },
  { art: <><defs><linearGradient id="wk" x1="0" x2="1" y2="1"><stop stopColor="#8a5cff" /><stop offset=".5" stopColor="#f0206a" /><stop offset="1" stopColor="#ff3030" /></linearGradient></defs><circle cx="15" cy="15" r="15" fill="url(#wk)" /><path d="M5 10.500h7l3.500 9.500 3.500-9 2.500 8 3.500-8.500M6.500 11l4 9.500h2l3.500-9" stroke="#fff" strokeWidth="2.100" strokeLinejoin="round" fill="none" /><rect x="21.500" y="-2" width="10.500" height="12" rx="2" fill="#ef6f70" /><path d="M26.500 4.500h1a1.800 1.800 0 1 0-1.800-2v2.500h-1a1.200 1.200 0 1 0 1 2" stroke="#fff" fill="none" strokeWidth="1.100" /></>, on: true },
  { art: <><circle cx="15" cy="15" r="15" fill="#e33b2e" /><path d="M1.500 8.500A15 15 0 0 0 15 30l6-12-12-.5z" fill="#2da14c" /><path d="M15 30A15 15 0 0 0 29 9.500H15L21 19z" fill="#fcc934" /><circle cx="15" cy="15" r="7" fill="#fff" /><circle cx="15" cy="15" r="5.500" fill="#3a7ded" /><circle cx="26.500" cy="4" r="9.500" fill="#d4d9dd" stroke="#aab" /><circle cx="26.500" cy="1" r="3" fill="#50606e" /><path d="M21 9.500c0-6 11-6 11 0z" fill="#50606e" /></>, dot: true },
  { art: <><defs><linearGradient id="ph" x1="0" x2="1" y1="1" y2="0"><stop stopColor="#0a6ad0" /><stop offset="1" stopColor="#5a55a8" /></linearGradient></defs><rect x="2" y="2" width="26" height="26" rx="2.500" fill="url(#ph)" /><path d="M3 27 12 14q2-2 4 0l11 13z" fill="#35c3f3" /><path d="M9 28l5-7q1.500-1.500 3 0l6 7z" fill="#0c58b8" /><circle cx="22" cy="7" r="2.500" fill="#fff" /></>, dot: true },
];

function Taskbar() {
  return (
    <div className="flex h-[59px] bg-[#cde7ed] text-[14.500px] text-[#1b1b1b]">
      <div className="flex h-[58px] items-center">
        <div className="ml-[25px] flex size-[30px] items-center justify-center rounded-full bg-[linear-gradient(135deg,#f2bb30,#f06a10_75%)] text-[10px] font-bold text-white">UV</div>
        <div className="ml-[9px] w-[61px] whitespace-nowrap leading-[20px]"><div className="tracking-[-0.5px]">31°C</div><div className="tracking-[0.1px] text-[#4d5a5e]">High UV</div></div>
        <div className="ml-[377px] grid grid-cols-2 gap-px">
          {["bg-[#3fc0f6]", "bg-[#28a8ee]", "bg-[#1e98e8]", "bg-[#0a78d4]"].map((c) => <div key={c} className={`size-[14px] rounded-[1px] ${c}`} />)}
        </div>
        <div className="ml-[18px] flex h-[39px] w-[273px] items-center rounded-full border border-[#b9cfd6] bg-[#eff7fa] pl-[13px]">
          <Ic w={18} h={19} sw={2.200} className="text-[#222]"><circle cx="8" cy="8" r="6.800" /><path d="m12.500 13 5 5" /></Ic>
          <span className="ml-[13px] text-[16.500px] text-[#5c6366]">Search</span>
        </div>
        <div className="ml-[3px] flex h-[58px]">
          {APPS.map((a, i) => (
            <div key={i} className="flex w-[55px] flex-col items-center pt-[5px]">
              <div className={`flex h-[48px] w-[48px] flex-col items-center rounded-[5px] pt-[9px] ${a.on ? "bg-[#e6f3f7]" : ""}`}>
                <svg width="30" height="30" viewBox="0 0 30 30" className="shrink-0 overflow-visible">{a.art}</svg>
                {a.dot && <div className="mt-[5px] h-[4px] w-[8px] shrink-0 rounded-full bg-[#77868b]" />}
                {a.on && <div className="mt-[5px] h-[4px] w-[20px] shrink-0 rounded-full bg-[#26838f]" />}
              </div>
            </div>
          ))}
        </div>
        <Ic w={14} h={8} sw={1.900} className="ml-[126px] text-[#222]"><path d="m1 7 6-6 6 6" /></Ic>
        <svg width="21" height="15" viewBox="0 0 21 15" className="ml-[23px]"><path d="M5 14A4.300 4.300 0 0 1 4.500 5.500a6 6 0 0 1 11-.5A4.600 4.600 0 0 1 16 14z" fill="#8d8d8d" stroke="#1a1a1a" strokeWidth="1.300" /><path d="M3 12.500 12 8l7 3.500a3 3 0 0 1-3 2H5z" fill="#e4e4e4" /></svg>
        <div className="ml-[20px] w-[34px] text-center text-[14.800px] leading-[20px] tracking-[-0.3px]">ENG<br />IN</div>
        <Ic w={20} h={16} sw={1.600} className="ml-[20px] text-[#222]"><path d="M1 6.500a13 13 0 0 1 18 0M3.500 9.500a9.500 9.500 0 0 1 13 0" opacity=".3" /><path d="M5.500 11.500a6 6 0 0 1 9 0" /><circle cx="10" cy="14" r="1.600" fill="currentColor" stroke="none" /></Ic>
        <Ic w={20} h={16} sw={1.400} className="ml-[10px] text-[#222]"><path d="M1 5.500h3L8.500 1.500v13L4 10.500H1zM11 5a4 4 0 0 1 0 6M13.500 3a7 7 0 0 1 0 10" /><path d="M16 1a10 10 0 0 1 0 14" opacity=".25" /></Ic>
        <Ic w={20} h={12} sw={1.500} className="ml-[10px] text-[#222]"><rect x=".8" y=".8" width="16" height="10.400" rx="2.500" /><rect x="3" y="3" width="3" height="6" fill="currentColor" stroke="none" /><path d="M18 4v4l2-1V5z" fill="currentColor" stroke="none" /></Ic>
        <div className="ml-[10px] w-[88px] whitespace-nowrap text-right text-[14.800px] leading-[20px] tracking-[0.1px]">23:22<br />16-10-2023</div>
        <div className="ml-[9px] flex size-[20px] items-center justify-center rounded-full bg-[#26838f] text-[11px] font-bold text-white">1</div>
      </div>
    </div>
  );
}

export default function App() {
  return (
    <div className="flex h-[1080px] w-[1920px] flex-col overflow-hidden bg-[#eeeeee] font-['Open_Sans',sans-serif] text-[14.300px] text-[#2a2a2a]">
      <TitleBar />
      <MenuBar />
      <Ribbon />
      <div className="flex h-[805px] shrink-0">
        <LeftRail />
        <Thumbnails />
        <div className="flex w-[1453px] shrink-0 overflow-hidden">
          <div className="ml-[409px] mt-[17px] h-[800px] w-[615px] shrink-0 border border-[#d2d2d2] bg-white"><StoryPage active={1}><Bubbles /></StoryPage></div>
          <div className="ml-[414px] flex w-[10px] flex-col items-center pt-[12px]">
            <svg width="8" height="7" viewBox="0 0 8 7" fill="#757575"><path d="M4 0 7.500 6.500H.5z" /></svg>
            <div className="mt-[105px] h-[92px] w-[10px] shrink-0 rounded-full bg-[#d1d1d1]" />
            <svg width="8" height="7" viewBox="0 0 8 7" fill="#757575" className="mt-[575px]"><path d="M4 6.500 7.500.5H.5z" /></svg>
          </div>
        </div>
        <RightRail />
      </div>
      <StatusBar />
      <Taskbar />
    </div>
  );
}
